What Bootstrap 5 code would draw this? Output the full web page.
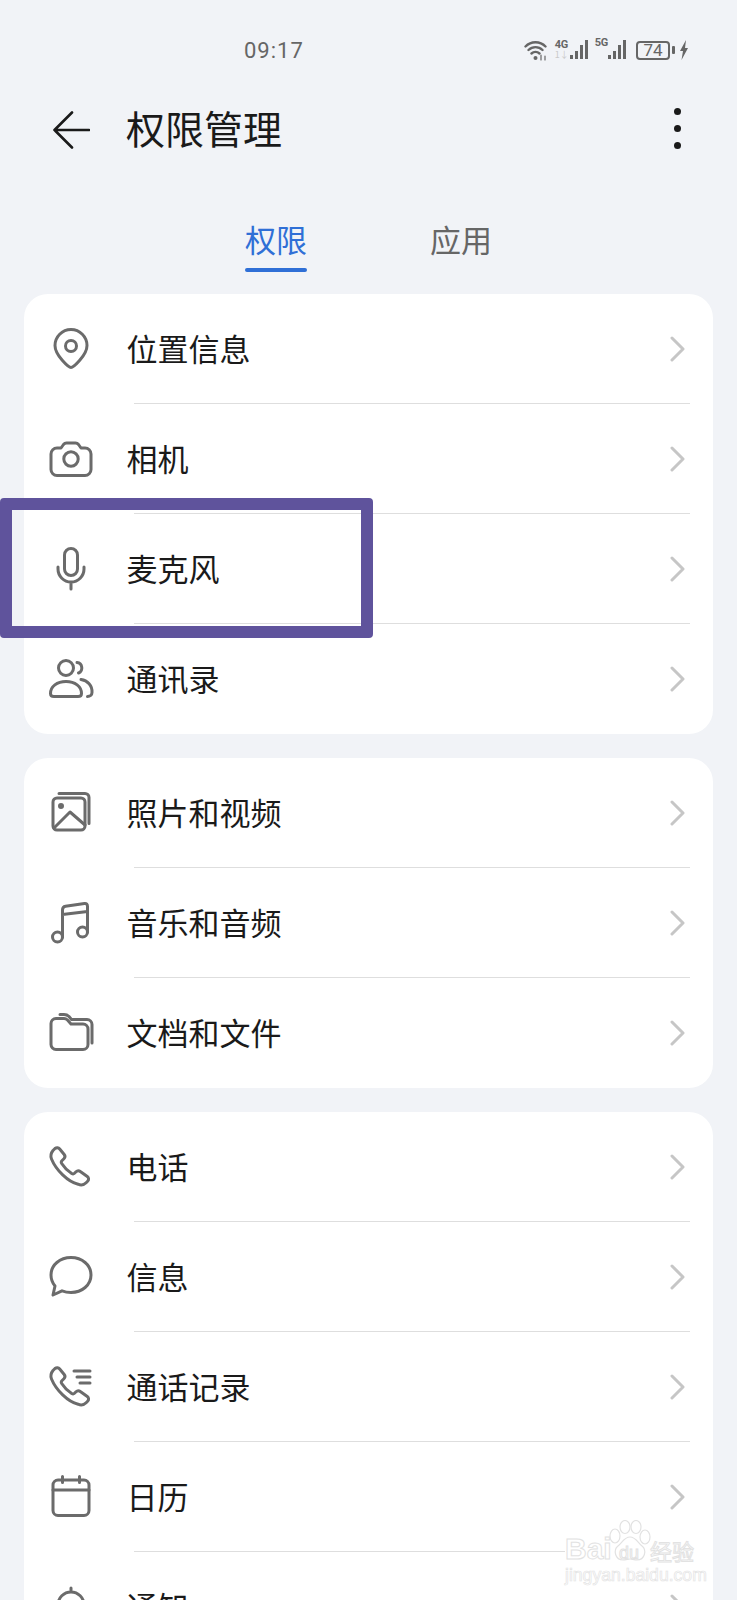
<!DOCTYPE html>
<html lang="zh-CN">
<head>
<meta charset="UTF-8">
<meta name="viewport" content="width=device-width, initial-scale=1.0">
<title>权限管理</title>
<link href="https://cdn.jsdelivr.net/npm/bootstrap@5.3.2/dist/css/bootstrap.min.css" rel="stylesheet">
<style>
html, body { height: 1600px; overflow: hidden; }
body { background: #f1f3f7; color: #1a1a1a; font-family: "Noto Sans CJK SC", "Noto Sans", sans-serif; position: relative; }
.status-bar { height: 100px; padding: 0 48px 0 244px; color: #666; }
.status-time { font-family: Roboto, sans-serif; font-size: 22px; letter-spacing: 1px; }
.net-label { font-family: Roboto, sans-serif; font-size: 11px; font-weight: 700; line-height: 10px; letter-spacing: -.3px; }
.net-sub { font-size: 9px; line-height: 10px; color: #c9c9c9; }
.batt { width: 34px; height: 19px; border: 2px solid #666; border-radius: 4px; font-family: Roboto, sans-serif; font-size: 17px; line-height: 15px; }
.batt-nub { width: 3px; height: 8px; background: #666; border-radius: 1px; }
.app-bar { height: 60px; padding: 0 56px 0 53px; }
.app-title { font-size: 39px; line-height: 60px; margin: 0 0 6px 36px; font-weight: 400; }
.dots { gap: 10px; margin-bottom: 3px; }
.dots i { display: block; width: 7px; height: 7px; border-radius: 50%; background: #1a1a1a; }
.tab-bar { padding-top: 59px; margin-bottom: 22px; gap: 123px; }
.tab-bar .nav-link { padding: 0; font-size: 31px; line-height: 40px; color: #666; }
.tab-bar .nav-link.active { color: #2f6fd6; }
.tab-bar .nav-link::after { content: ""; display: block; height: 4px; margin-top: 9px; border-radius: 2px; background: transparent; }
.tab-bar .nav-link.active::after { background: #2f6fd6; }
.perm-card { border-radius: 24px; margin-bottom: 24px; }
.perm-row { height: 109px; padding: 0 27px 0 22.5px; }
.perm-row:last-child { height: 110px; }
.perm-row .perm-icon { flex: none; fill: none; stroke: #6b6b6b; stroke-width: 3; stroke-linecap: round; stroke-linejoin: round; }
.perm-name { font-size: 31px; line-height: 40px; margin-left: 32px; margin-bottom: 2px; }
.perm-line { height: 1px; background: #dedede; margin: 0 23px 0 110px; }
.mark-box { position: absolute; left: 0; top: 498px; width: 373px; height: 140px; border: 12px solid #5f539c; border-radius: 4px; }
.wm { position: absolute; left: 565px; top: 1520px; width: 134px; height: 66px; background: #fff; color: #fff; -webkit-text-stroke: 1px #e2e2e2; font-family: "Liberation Sans", sans-serif; }
.wm-bai { position: absolute; left: 0; top: 12px; font-size: 30px; line-height: 34px; font-weight: 700; white-space: nowrap; }
.wm-du { position: absolute; left: 54px; top: 22px; font-size: 18px; line-height: 22px; white-space: nowrap; }
.wm-cn { position: absolute; left: 85px; top: 17px; font-size: 22px; line-height: 26px; font-family: "Noto Sans CJK SC", sans-serif; white-space: nowrap; }
.wm-url { position: absolute; left: 0; top: 44px; font-size: 17.6px; line-height: 22px; white-space: nowrap; -webkit-text-stroke: .7px #e4e4e4; }
</style>
</head>
<body>

<div class="status-bar d-flex align-items-center justify-content-between">
    <span class="status-time">09:17</span>
    <div class="d-flex align-items-center">
        <svg width="23" height="22" viewBox="0 0 23 22" fill="none" stroke="#666" stroke-width="2.400" stroke-linecap="round">
            <path d="M1.500 7.500a14 14 0 0 1 20 0M4.500 11a10 10 0 0 1 14 0M7.500 14.500a6 6 0 0 1 8 0"/>
            <circle cx="11.500" cy="19" r="2" fill="#666" stroke="none"/>
            <path d="M17 16v5M21 17v4" stroke-width="1.200"/>
        </svg>
        <div class="ms-2 d-flex flex-column"><span class="net-label">4G</span><span class="net-sub">1↓</span></div>
        <svg width="22" height="20" viewBox="0 0 22 20" fill="#666"><rect x="1" y="15" width="3" height="4"/><rect x="6" y="11" width="3" height="8"/><rect x="11" y="5" width="3" height="14"/><rect x="16" y="0" width="3" height="19"/></svg>
        <div class="ms-1 d-flex flex-column align-self-start" style="margin-top:-1px"><span class="net-label">5G</span></div>
        <svg width="20" height="20" viewBox="0 0 20 20" fill="#666"><rect x="0" y="15" width="3" height="4"/><rect x="5" y="11" width="3" height="8"/><rect x="10" y="5" width="3" height="14"/><rect x="15" y="0" width="3" height="19"/></svg>
        <div class="batt ms-2 text-center">74</div>
        <div class="batt-nub" style="margin-left:2px"></div>
        <svg class="ms-1" width="10" height="20" viewBox="0 0 10 20" fill="#666"><path d="M7 0 1 11h3l-1.500 9L9 8H6z"/></svg>
    </div>
</div>

<div class="app-bar d-flex align-items-center">
    <svg width="37" height="38" viewBox="0 0 37 38" fill="none" stroke="#1a1a1a" stroke-width="2.600" stroke-linecap="round" stroke-linejoin="round"><path d="M19 1.500 1.500 19 19 36.500M1.500 19H36"/></svg>
    <h1 class="app-title">权限管理</h1>
    <div class="dots ms-auto d-flex flex-column"><i></i><i></i><i></i></div>
</div>

<ul class="nav tab-bar justify-content-center">
    <li class="nav-item"><a class="nav-link active" href="#">权限</a></li>
    <li class="nav-item"><a class="nav-link" href="#">应用</a></li>
</ul>

<div class="card perm-card border-0 mx-4">
    <div class="perm-row d-flex align-items-center">
        <svg class="perm-icon" width="48" height="48" viewBox="0 0 48 48"><path d="M24 42.500c-2 0-16-12-16-22a16 16 0 0 1 32 0c0 10-14 22-16 22z"/><circle cx="24" cy="21" r="5.500"/></svg>
        <span class="perm-name">位置信息</span>
        <svg class="ms-auto" width="16" height="28" viewBox="0 0 16 28" fill="none" stroke="#c6c6c6" stroke-width="3" stroke-linecap="round" stroke-linejoin="round"><path d="M2 3l11 11L2 25"/></svg>
    </div>
    <div class="perm-line"></div>
    <div class="perm-row d-flex align-items-center">
        <svg class="perm-icon" width="48" height="48" viewBox="0 0 48 48"><path d="M10 13h4l2.500-3.500c.8-1 1.500-1.500 3-1.500h9c1.500 0 2.200.5 3 1.500L34 13h4a6 6 0 0 1 6 6v15.500a6 6 0 0 1-6 6H10a6 6 0 0 1-6-6V19a6 6 0 0 1 6-6z"/><circle cx="24" cy="24" r="7.200"/></svg>
        <span class="perm-name">相机</span>
        <svg class="ms-auto" width="16" height="28" viewBox="0 0 16 28" fill="none" stroke="#c6c6c6" stroke-width="3" stroke-linecap="round" stroke-linejoin="round"><path d="M2 3l11 11L2 25"/></svg>
    </div>
    <div class="perm-line"></div>
    <div class="perm-row d-flex align-items-center">
        <svg class="perm-icon" width="48" height="48" viewBox="0 0 48 48"><rect x="17.500" y="3.500" width="13" height="27" rx="6.500"/><path d="M11 22v2a13 13 0 0 0 26 0v-2M24 37v7"/></svg>
        <span class="perm-name">麦克风</span>
        <svg class="ms-auto" width="16" height="28" viewBox="0 0 16 28" fill="none" stroke="#c6c6c6" stroke-width="3" stroke-linecap="round" stroke-linejoin="round"><path d="M2 3l11 11L2 25"/></svg>
    </div>
    <div class="perm-line"></div>
    <div class="perm-row d-flex align-items-center">
        <svg class="perm-icon" width="48" height="48" viewBox="0 0 48 48"><circle cx="19" cy="13" r="7.500"/><path d="M30 7.500a5.500 5.500 0 0 1 1.500 10.500"/><path d="M7 41.500c-2 0-3.500-1.200-3.500-3C3.500 31.500 10 26.500 19 26.500s15.500 5 15.500 12c0 1.800-1.500 3-3.500 3z"/><path d="M34 24.500c6.500 1 11.500 6 11 13 0 2.500-2 4-4.500 4"/></svg>
        <span class="perm-name">通讯录</span>
        <svg class="ms-auto" width="16" height="28" viewBox="0 0 16 28" fill="none" stroke="#c6c6c6" stroke-width="3" stroke-linecap="round" stroke-linejoin="round"><path d="M2 3l11 11L2 25"/></svg>
    </div>
</div>

<div class="card perm-card border-0 mx-4">
    <div class="perm-row d-flex align-items-center">
        <svg class="perm-icon" width="48" height="48" viewBox="0 0 48 48"><rect x="6" y="9" width="32" height="32" rx="4"/><path d="M12 4.500h26a4 4 0 0 1 4 4v26M7 39l16-16 15 13"/><circle cx="14" cy="17" r="1.500"/></svg>
        <span class="perm-name">照片和视频</span>
        <svg class="ms-auto" width="16" height="28" viewBox="0 0 16 28" fill="none" stroke="#c6c6c6" stroke-width="3" stroke-linecap="round" stroke-linejoin="round"><path d="M2 3l11 11L2 25"/></svg>
    </div>
    <div class="perm-line"></div>
    <div class="perm-row d-flex align-items-center">
        <svg class="perm-icon" width="48" height="48" viewBox="0 0 48 48"><circle cx="10.500" cy="38" r="5"/><circle cx="35.500" cy="33" r="5"/><path d="M15.500 38V11c0-2 1-3.500 3-3.800l19-2.700c2-.3 3 1 3 3V33M15.500 15.500l25-3"/></svg>
        <span class="perm-name">音乐和音频</span>
        <svg class="ms-auto" width="16" height="28" viewBox="0 0 16 28" fill="none" stroke="#c6c6c6" stroke-width="3" stroke-linecap="round" stroke-linejoin="round"><path d="M2 3l11 11L2 25"/></svg>
    </div>
    <div class="perm-line"></div>
    <div class="perm-row d-flex align-items-center">
        <svg class="perm-icon" width="48" height="48" viewBox="0 0 48 48"><path d="M9 9.500h8c1.500 0 2.500.5 3.500 1.500l3.500 4h12a5 5 0 0 1 5 5v15.500a5 5 0 0 1-5 5H9a5 5 0 0 1-5-5v-21a5 5 0 0 1 5-5z"/><path d="M13 5.500h4c2 0 3.500.5 5 2l2.500 3H40a5 5 0 0 1 5 5V34"/></svg>
        <span class="perm-name">文档和文件</span>
        <svg class="ms-auto" width="16" height="28" viewBox="0 0 16 28" fill="none" stroke="#c6c6c6" stroke-width="3" stroke-linecap="round" stroke-linejoin="round"><path d="M2 3l11 11L2 25"/></svg>
    </div>
</div>

<div class="card perm-card border-0 mx-4">
    <div class="perm-row d-flex align-items-center">
        <svg class="perm-icon" width="48" height="48" viewBox="0 0 48 48"><path d="M8 5.500c1.500-1.200 3.500-1 4.700.5l4.500 5.500c1 1.300.9 3-.3 4.200l-2 2c-.8.8-.8 1.800-.2 2.800 2.500 4 6 7.500 10 10 1 .6 2 .6 2.800-.2l1.500-1.500c1.200-1.200 3-1.300 4.300-.3l7 5c1.600 1.200 1.700 3.300.3 4.700l-1.500 1.500c-2 2-5 2.800-8 1.500C21 39 9 27 4.500 16c-1.200-3-.5-6 1.500-8.500z"/></svg>
        <span class="perm-name">电话</span>
        <svg class="ms-auto" width="16" height="28" viewBox="0 0 16 28" fill="none" stroke="#c6c6c6" stroke-width="3" stroke-linecap="round" stroke-linejoin="round"><path d="M2 3l11 11L2 25"/></svg>
    </div>
    <div class="perm-line"></div>
    <div class="perm-row d-flex align-items-center">
        <svg class="perm-icon" width="48" height="48" viewBox="0 0 48 48"><path d="M24 4.500c11 0 20 7.500 20 17.500s-9 17.500-20 17.500c-3 0-6-.5-9-1.700L6 42l2-9c-2.500-3-4-7-4-11C4 12 13 4.500 24 4.500z"/></svg>
        <span class="perm-name">信息</span>
        <svg class="ms-auto" width="16" height="28" viewBox="0 0 16 28" fill="none" stroke="#c6c6c6" stroke-width="3" stroke-linecap="round" stroke-linejoin="round"><path d="M2 3l11 11L2 25"/></svg>
    </div>
    <div class="perm-line"></div>
    <div class="perm-row d-flex align-items-center">
        <svg class="perm-icon" width="48" height="48" viewBox="0 0 48 48"><path d="M8 5.500c1.500-1.200 3.500-1 4.700.5l4.500 5.500c1 1.300.9 3-.3 4.200l-2 2c-.8.8-.8 1.800-.2 2.800 2.500 4 6 7.500 10 10 1 .6 2 .6 2.800-.2l1.500-1.500c1.200-1.200 3-1.300 4.300-.3l7 5c1.600 1.200 1.700 3.300.3 4.700l-1.500 1.500c-2 2-5 2.800-8 1.500C21 39 9 27 4.500 16c-1.200-3-.5-6 1.500-8.500z"/><path d="M27 8h16M30 14h13M33 20h10"/></svg>
        <span class="perm-name">通话记录</span>
        <svg class="ms-auto" width="16" height="28" viewBox="0 0 16 28" fill="none" stroke="#c6c6c6" stroke-width="3" stroke-linecap="round" stroke-linejoin="round"><path d="M2 3l11 11L2 25"/></svg>
    </div>
    <div class="perm-line"></div>
    <div class="perm-row d-flex align-items-center">
        <svg class="perm-icon" width="48" height="48" viewBox="0 0 48 48"><rect x="6" y="7" width="36" height="35.500" rx="5"/><path d="M6 17h36M15.500 3.500v6M32.500 3.500v6"/></svg>
        <span class="perm-name">日历</span>
        <svg class="ms-auto" width="16" height="28" viewBox="0 0 16 28" fill="none" stroke="#c6c6c6" stroke-width="3" stroke-linecap="round" stroke-linejoin="round"><path d="M2 3l11 11L2 25"/></svg>
    </div>
    <div class="perm-line"></div>
    <div class="perm-row d-flex align-items-center">
        <svg class="perm-icon" width="48" height="48" viewBox="0 0 48 48"><path d="M11 36V22a13 13 0 0 1 26 0v14M24 5v4M6 36h36"/></svg>
        <span class="perm-name">通知</span>
        <svg class="ms-auto" width="16" height="28" viewBox="0 0 16 28" fill="none" stroke="#c6c6c6" stroke-width="3" stroke-linecap="round" stroke-linejoin="round"><path d="M2 3l11 11L2 25"/></svg>
    </div>
</div>

<!-- annotation frame and watermark sit over the page -->
<div class="mark-box"></div>
<div class="wm">
    <span class="wm-bai">Bai</span>
    <svg class="position-absolute" style="left:44px;top:0" width="42" height="44" viewBox="0 0 42 44" fill="#fff" stroke="#e2e2e2" stroke-width="1.200"><ellipse cx="6" cy="16" rx="5" ry="7"/><ellipse cx="16" cy="7" rx="5" ry="6.500"/><ellipse cx="27" cy="7" rx="5" ry="6.500"/><ellipse cx="36" cy="17" rx="5" ry="7"/><path d="M21 17c6 0 8 6 12 9 5 4 3 14-5 14-3 0-5-1-7-1s-4 1-7 1c-8 0-10-10-5-14 4-3 6-9 12-9z"/></svg>
    <span class="wm-du">du</span>
    <span class="wm-cn">经验</span>
    <span class="wm-url">jingyan.baidu.com</span>
</div>

<script src="https://cdn.jsdelivr.net/npm/bootstrap@5.3.2/dist/js/bootstrap.bundle.min.js"></script>
</body>
</html>
